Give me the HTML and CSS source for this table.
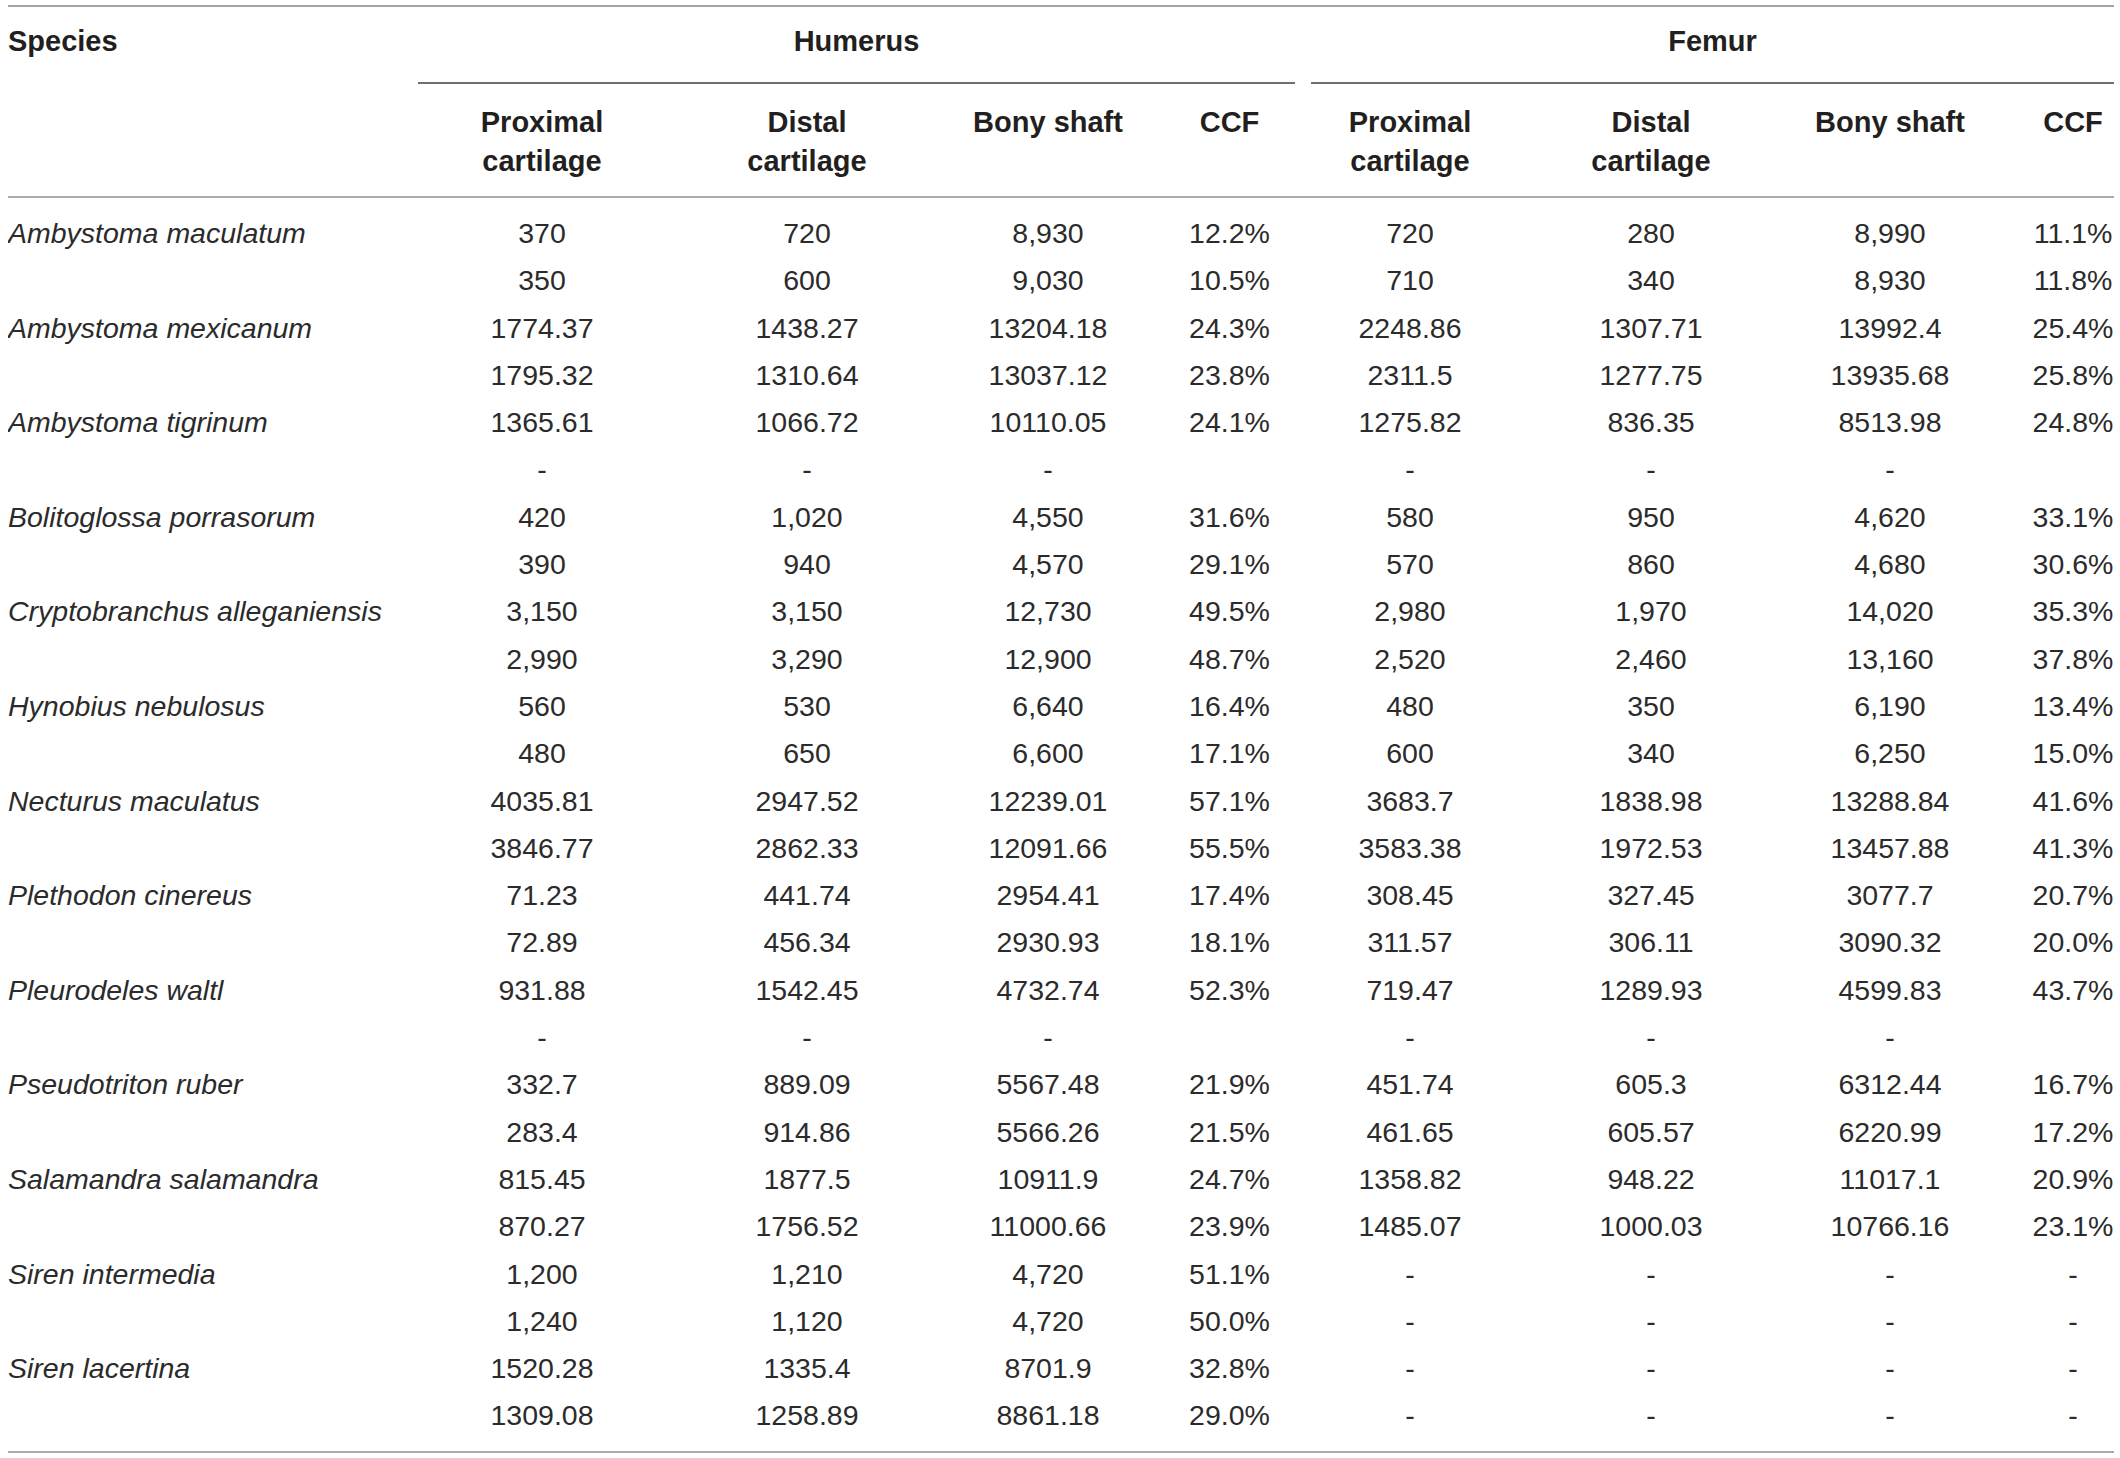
FILE: index.html
```html
<!DOCTYPE html>
<html lang="en">
<head>
    <meta charset="UTF-8">
    <meta name="viewport" content="width=device-width, initial-scale=1.0">
    <title>Cartilage and bony shaft lengths</title>
    <link rel="stylesheet" href="styles.css">
</head>
<body>

    <table class="data-table">
        <colgroup>
            <col class="c-species">
            <col class="c-prox">
            <col class="c-distal">
            <col class="c-bony">
            <col class="c-ccf">
            <col class="c-fprox">
            <col class="c-fdistal">
            <col class="c-fbony">
            <col class="c-fccf">
        </colgroup>
        <thead>
            <tr class="group-row">
                <th rowspan="2" class="species-head">Species</th>
                <th colspan="4" class="group"><span class="group-label humerus">Humerus</span></th>
                <th colspan="4" class="group"><span class="group-label">Femur</span></th>
            </tr>
            <tr class="sub-row">
                <th class="sub">Proximal<br>cartilage</th>
                <th class="sub">Distal<br>cartilage</th>
                <th class="sub">Bony shaft</th>
                <th class="sub">CCF</th>
                <th class="sub">Proximal<br>cartilage</th>
                <th class="sub">Distal<br>cartilage</th>
                <th class="sub">Bony shaft</th>
                <th class="sub last">CCF</th>
            </tr>
        </thead>
        <tbody>
            <tr><td class="species">Ambystoma maculatum</td><td>370</td><td>720</td><td>8,930</td><td>12.2%</td><td>720</td><td>280</td><td>8,990</td><td class="last">11.1%</td></tr>
            <tr><td class="species"></td><td>350</td><td>600</td><td>9,030</td><td>10.5%</td><td>710</td><td>340</td><td>8,930</td><td class="last">11.8%</td></tr>
            <tr><td class="species">Ambystoma mexicanum</td><td>1774.37</td><td>1438.27</td><td>13204.18</td><td>24.3%</td><td>2248.86</td><td>1307.71</td><td>13992.4</td><td class="last">25.4%</td></tr>
            <tr><td class="species"></td><td>1795.32</td><td>1310.64</td><td>13037.12</td><td>23.8%</td><td>2311.5</td><td>1277.75</td><td>13935.68</td><td class="last">25.8%</td></tr>
            <tr><td class="species">Ambystoma tigrinum</td><td>1365.61</td><td>1066.72</td><td>10110.05</td><td>24.1%</td><td>1275.82</td><td>836.35</td><td>8513.98</td><td class="last">24.8%</td></tr>
            <tr><td class="species"></td><td>-</td><td>-</td><td>-</td><td></td><td>-</td><td>-</td><td>-</td><td class="last"></td></tr>
            <tr><td class="species">Bolitoglossa porrasorum</td><td>420</td><td>1,020</td><td>4,550</td><td>31.6%</td><td>580</td><td>950</td><td>4,620</td><td class="last">33.1%</td></tr>
            <tr><td class="species"></td><td>390</td><td>940</td><td>4,570</td><td>29.1%</td><td>570</td><td>860</td><td>4,680</td><td class="last">30.6%</td></tr>
            <tr><td class="species">Cryptobranchus alleganiensis</td><td>3,150</td><td>3,150</td><td>12,730</td><td>49.5%</td><td>2,980</td><td>1,970</td><td>14,020</td><td class="last">35.3%</td></tr>
            <tr><td class="species"></td><td>2,990</td><td>3,290</td><td>12,900</td><td>48.7%</td><td>2,520</td><td>2,460</td><td>13,160</td><td class="last">37.8%</td></tr>
            <tr><td class="species">Hynobius nebulosus</td><td>560</td><td>530</td><td>6,640</td><td>16.4%</td><td>480</td><td>350</td><td>6,190</td><td class="last">13.4%</td></tr>
            <tr><td class="species"></td><td>480</td><td>650</td><td>6,600</td><td>17.1%</td><td>600</td><td>340</td><td>6,250</td><td class="last">15.0%</td></tr>
            <tr><td class="species">Necturus maculatus</td><td>4035.81</td><td>2947.52</td><td>12239.01</td><td>57.1%</td><td>3683.7</td><td>1838.98</td><td>13288.84</td><td class="last">41.6%</td></tr>
            <tr><td class="species"></td><td>3846.77</td><td>2862.33</td><td>12091.66</td><td>55.5%</td><td>3583.38</td><td>1972.53</td><td>13457.88</td><td class="last">41.3%</td></tr>
            <tr><td class="species">Plethodon cinereus</td><td>71.23</td><td>441.74</td><td>2954.41</td><td>17.4%</td><td>308.45</td><td>327.45</td><td>3077.7</td><td class="last">20.7%</td></tr>
            <tr><td class="species"></td><td>72.89</td><td>456.34</td><td>2930.93</td><td>18.1%</td><td>311.57</td><td>306.11</td><td>3090.32</td><td class="last">20.0%</td></tr>
            <tr><td class="species">Pleurodeles waltl</td><td>931.88</td><td>1542.45</td><td>4732.74</td><td>52.3%</td><td>719.47</td><td>1289.93</td><td>4599.83</td><td class="last">43.7%</td></tr>
            <tr><td class="species"></td><td>-</td><td>-</td><td>-</td><td></td><td>-</td><td>-</td><td>-</td><td class="last"></td></tr>
            <tr><td class="species">Pseudotriton ruber</td><td>332.7</td><td>889.09</td><td>5567.48</td><td>21.9%</td><td>451.74</td><td>605.3</td><td>6312.44</td><td class="last">16.7%</td></tr>
            <tr><td class="species"></td><td>283.4</td><td>914.86</td><td>5566.26</td><td>21.5%</td><td>461.65</td><td>605.57</td><td>6220.99</td><td class="last">17.2%</td></tr>
            <tr><td class="species">Salamandra salamandra</td><td>815.45</td><td>1877.5</td><td>10911.9</td><td>24.7%</td><td>1358.82</td><td>948.22</td><td>11017.1</td><td class="last">20.9%</td></tr>
            <tr><td class="species"></td><td>870.27</td><td>1756.52</td><td>11000.66</td><td>23.9%</td><td>1485.07</td><td>1000.03</td><td>10766.16</td><td class="last">23.1%</td></tr>
            <tr><td class="species">Siren intermedia</td><td>1,200</td><td>1,210</td><td>4,720</td><td>51.1%</td><td>-</td><td>-</td><td>-</td><td class="last">-</td></tr>
            <tr><td class="species"></td><td>1,240</td><td>1,120</td><td>4,720</td><td>50.0%</td><td>-</td><td>-</td><td>-</td><td class="last">-</td></tr>
            <tr><td class="species">Siren lacertina</td><td>1520.28</td><td>1335.4</td><td>8701.9</td><td>32.8%</td><td>-</td><td>-</td><td>-</td><td class="last">-</td></tr>
            <tr><td class="species"></td><td>1309.08</td><td>1258.89</td><td>8861.18</td><td>29.0%</td><td>-</td><td>-</td><td>-</td><td class="last">-</td></tr>
        </tbody>
    </table>

</body>
</html>
```

FILE: styles.css
```css
/* General */
body {
    margin: 5px 6px 0 8px;
    background: #fff;
    color: #231f20;
    font-family: "Liberation Sans", Arial, sans-serif;
}

.data-table {
    width: 2106px;
    table-layout: fixed;
    border-collapse: separate;
    border-spacing: 0;
    border-top: 2px solid #a3a3a3;
    border-bottom: 2px solid #ababab;
}

/* Column widths */
.c-species { width: 410px; }
.c-prox    { width: 248px; }
.c-distal  { width: 282px; }
.c-bony    { width: 200px; }
.c-ccf     { width: 163px; }
.c-fprox   { width: 198px; }
.c-fdistal { width: 284px; }
.c-fbony   { width: 194px; }
.c-fccf    { width: 127px; }

/* Header */
th {
    font-size: 29px;
    font-weight: bold;
    line-height: 39px;
    text-align: center;
    vertical-align: top;
    padding: 0;
}

.species-head {
    text-align: left;
    padding-top: 15px;
    border-bottom: 2px solid #ababab;
}

.group {
    padding-top: 15px;
}

.group-label {
    display: block;
    padding-bottom: 21px;
    border-bottom: 2px solid #6f6f6f;
}

.group-label.humerus {
    margin-right: 16px;
}

.sub {
    padding: 19px 0 15px;
    border-bottom: 2px solid #ababab;
}

/* Body */
td {
    font-size: 28.5px;
    line-height: 47.3px;
    text-align: center;
    padding: 0;
    color: #2b2b2b;
    white-space: nowrap;
}

td.species {
    text-align: left;
    font-style: italic;
}

th.last,
td.last {
    padding-left: 45px;
}

tbody tr:first-child td {
    padding-top: 12px;
}

tbody tr:last-child td {
    padding-bottom: 11px;
}
```
